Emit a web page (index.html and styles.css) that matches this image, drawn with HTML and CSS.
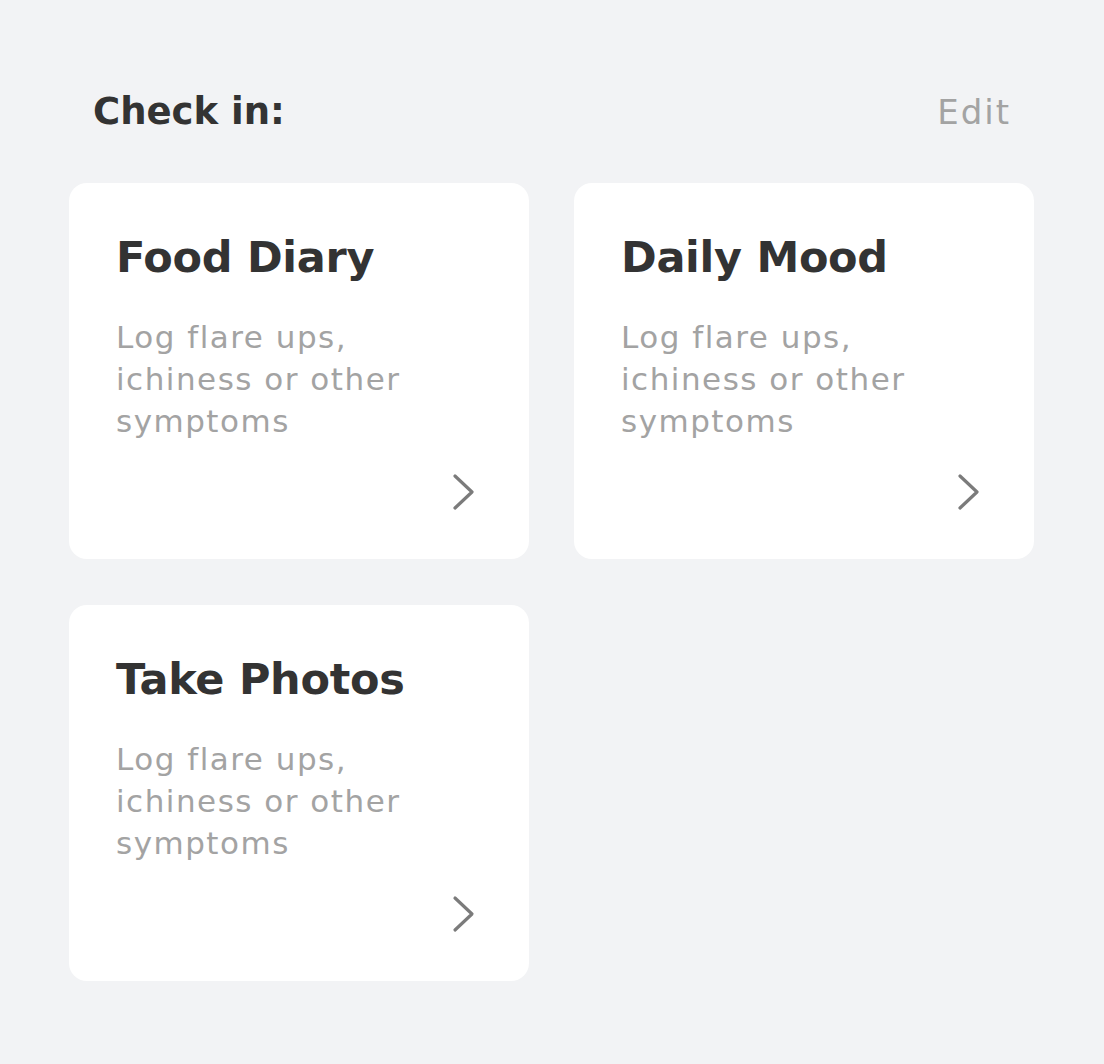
FILE: index.html
```html
<!DOCTYPE html>
<html lang="en">
<head>
<meta charset="utf-8">
<title>Check in</title>
<link rel="stylesheet" href="styles.css">
</head>
<body>
<main class="page">
  <header class="head">
    <h1 class="head-title">Check in:</h1>
    <span class="head-edit">Edit</span>
  </header>
  <section class="grid">
    <article class="card">
      <h2 class="card-title">Food Diary</h2>
      <p class="card-text">Log flare ups,<br>ichiness or other<br>symptoms</p>
      <svg class="chev" width="24" height="40" viewBox="0 0 24 40"><path d="M4 3 L21 19 L4 35" fill="none" stroke="#7b7b7b" stroke-width="3.2" stroke-linecap="round" stroke-linejoin="round"/></svg>
    </article>
    <article class="card">
      <h2 class="card-title">Daily Mood</h2>
      <p class="card-text">Log flare ups,<br>ichiness or other<br>symptoms</p>
      <svg class="chev" width="24" height="40" viewBox="0 0 24 40"><path d="M4 3 L21 19 L4 35" fill="none" stroke="#7b7b7b" stroke-width="3.2" stroke-linecap="round" stroke-linejoin="round"/></svg>
    </article>
    <article class="card">
      <h2 class="card-title">Take Photos</h2>
      <p class="card-text">Log flare ups,<br>ichiness or other<br>symptoms</p>
      <svg class="chev" width="24" height="40" viewBox="0 0 24 40"><path d="M4 3 L21 19 L4 35" fill="none" stroke="#7b7b7b" stroke-width="3.2" stroke-linecap="round" stroke-linejoin="round"/></svg>
    </article>
  </section>
</main>
</body>
</html>
```
FILE: styles.css
```css
html, body {
  margin: 0;
  padding: 0;
  background: #f2f3f5;
}
body {
  font-family: "DejaVu Sans", Inter, sans-serif;
  width: 1104px;
  height: 1064px;
  overflow: hidden;
}
.page {
  padding: 88px 70px 0 69px;
}
.head {
  display: flex;
  justify-content: space-between;
  align-items: baseline;
  padding: 0 25px 0 24px;
  height: 95px;
}
.head-title {
  margin: 0;
  font-size: 37px;
  line-height: 48px;
  font-weight: 700;
  color: #333333;
}
.head-edit {
  font-size: 34px;
  line-height: 48px;
  color: #a3a3a3;
  letter-spacing: 2px;
  margin-right: -2px;
}
.grid {
  display: grid;
  grid-template-columns: 460px 460px;
  grid-auto-rows: 376px;
  column-gap: 45px;
  row-gap: 46px;
}
.card {
  background: #ffffff;
  border-radius: 18px;
  padding: 48px 54px 46px 47px;
  display: flex;
  flex-direction: column;
  box-sizing: border-box;
}
.card-title {
  margin: 0;
  font-size: 43px;
  line-height: 52px;
  font-weight: 700;
  color: #333333;
  letter-spacing: -0.3px;
}
.card-text {
  margin: 33px 0 0;
  font-size: 31px;
  line-height: 42px;
  color: #a3a3a3;
  letter-spacing: 1.5px;
}
.chev {
  margin-top: auto;
  align-self: flex-end;
  display: block;
}
```
